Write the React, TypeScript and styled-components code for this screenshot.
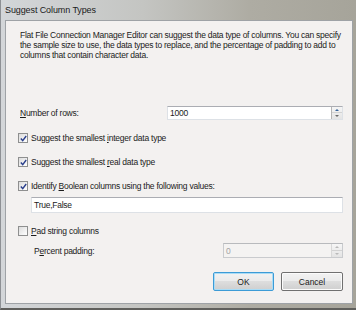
import { FC } from 'react';
import styled, { createGlobalStyle } from 'styled-components';

const GlobalStyle = createGlobalStyle`
	html, body {
		margin: 0;
		padding: 0;
		background: #f3f1f0;
	}
	body {
		font-family: 'Liberation Sans', Arial, sans-serif;
	}
`;

const Window = styled.div({
	width: '356px',
	height: '310px',
	boxSizing: 'border-box',
	display: 'flex',
	flexDirection: 'column',
	background: 'linear-gradient(90deg, #d3d6d9 0%, #c4c5c2 40%, #aeaca3 70%, #a6a49a 100%)',
	borderLeft: '1px solid #8d9094',
	borderBottom: '2px solid #5f5f5c',
	overflow: 'hidden',
	userSelect: 'none',
});

const TitleBar = styled.div({
	height: '19px',
	flex: 'none',
	display: 'flex',
	alignItems: 'center',
	paddingLeft: '4px',
	fontSize: '9px',
	letterSpacing: '-0.1px',
	color: '#1a1a1a',
});

const Body = styled.div({
	flex: 1,
	margin: '1px 3px 4px 4px',
	border: '1px solid #9ea2a6',
	background: '#f3f1f0',
	display: 'flex',
	flexDirection: 'column',
	padding: '0 9px 0 12px',
	fontSize: '8.5px',
	letterSpacing: '-0.25px',
	color: '#1b1b1b',
});

const Description = styled.p({
	margin: '9px 0 0 2px',
	lineHeight: '10px',
	whiteSpace: 'nowrap',
});

const Row = styled.div<{ $top: number; $height: number }>`
	display: flex;
	align-items: center;
	flex: none;
	margin-top: ${(p) => p.$top}px;
	height: ${(p) => p.$height}px;
`;

const Label = styled.span<{ $indent?: number }>`
	padding-left: ${(p) => p.$indent ?? 0}px;
	flex: 1;
	white-space: nowrap;
`;

const Key = styled.span({
	textDecoration: 'underline',
	textUnderlineOffset: '1px',
});

const TextBox = styled.div<{ $width?: number; $indent?: number; $disabled?: boolean }>`
	box-sizing: border-box;
	height: 100%;
	display: flex;
	align-items: center;
	position: relative;
	padding-left: 2px;
	margin-left: ${(p) => p.$indent ?? 0}px;
	${(p) => (p.$width ? `width: ${p.$width}px; flex: none;` : 'flex: 1;')}
	background: ${(p) => (p.$disabled ? '#f4f3f2' : '#ffffff')};
	border: 1px solid ${(p) => (p.$disabled ? '#c9cbce' : '#dde1e6')};
	border-top-color: ${(p) => (p.$disabled ? '#b8babd' : '#abadb3')};
	color: ${(p) => (p.$disabled ? '#a3a3a3' : '#1b1b1b')};
`;

const Spinner = styled.div<{ $disabled?: boolean }>`
	position: absolute;
	right: 0;
	top: 0;
	bottom: 0;
	width: 10px;
	display: grid;
	grid-template-rows: 1fr 1fr;
	border-left: 1px solid ${(p) => (p.$disabled ? '#d8d8d8' : '#b5b5b5')};
	background: linear-gradient(#f6f6f6, #e4e4e4);
`;

const SpinHalf = styled.div<{ $dir: 'up' | 'down'; $disabled?: boolean }>`
	display: flex;
	align-items: center;
	justify-content: center;
	${(p) => (p.$dir === 'up' ? 'border-bottom: 1px solid #d2d2d2;' : '')}
	&::after {
		content: '';
		border-left: 2px solid transparent;
		border-right: 2px solid transparent;
		${(p) => (p.$dir === 'up' ? 'border-bottom' : 'border-top')}: 2px solid ${(p) =>
			p.$disabled ? '#b9b9b9' : p.$dir === 'up' ? '#35639a' : '#6a6a6a'};
	}
`;

const Box = styled.span({
	boxSizing: 'border-box',
	width: '10px',
	height: '10px',
	flex: 'none',
	marginRight: '3px',
	border: '1px solid #8e8f8f',
	background: 'linear-gradient(135deg, #dcdcdc, #f5f5f5 70%, #ffffff)',
	display: 'flex',
	alignItems: 'center',
	justifyContent: 'center',
});

const ButtonBar = styled.div({
	display: 'flex',
	justifyContent: 'flex-end',
	gap: '7px',
	marginTop: '14px',
	height: '19px',
});

const Button = styled.button<{ $default?: boolean; $width: number }>`
	box-sizing: border-box;
	width: ${(p) => p.$width}px;
	height: 19px;
	padding: 0;
	font: inherit;
	font-size: 8.5px;
	color: #1b1b1b;
	border-radius: 2px;
	border: 1px solid ${(p) => (p.$default ? '#3c9bd6' : '#707070')};
	box-shadow: inset 0 0 0 1px ${(p) => (p.$default ? '#a9dcf6' : '#fbfbfb')};
	background: linear-gradient(#f2f2f2 0%, #ebebeb 45%, #dddddd 50%, #cfcfcf 100%);
`;

const Check: FC = () => (
	<svg width='7' height='7' viewBox='0 0 7 7'>
		<path d='M0.8 3.6 L2.7 5.6 L6.2 1' fill='none' stroke='#2a3f8c' strokeWidth='1.4' />
	</svg>
);

const Checkbox: FC<{ checked?: boolean; children: React.ReactNode; top: number }> = ({
	checked,
	children,
	top,
}) => (
	<Row $top={top} $height={12}>
		<Box>{checked && <Check />}</Box>
		<Label>{children}</Label>
	</Row>
);

const Spin: FC<{ disabled?: boolean }> = ({ disabled }) => (
	<Spinner $disabled={disabled}>
		<SpinHalf $dir='up' $disabled={disabled} />
		<SpinHalf $dir='down' $disabled={disabled} />
	</Spinner>
);

const App: FC = () => {
	return (
		<>
			<GlobalStyle />
			<Window>
				<TitleBar>Suggest Column Types</TitleBar>
				<Body>
					<Description>
						Flat File Connection Manager Editor can suggest the data type of columns. You can specify
						<br />
						the sample size to use, the data types to replace, and the percentage of padding to add to
						<br />
						columns that contain character data.
					</Description>

					<Row $top={46} $height={14}>
						<Label $indent={2}>
							<Key>N</Key>umber of rows:
						</Label>
						<TextBox $width={176}>
							1000
							<Spin />
						</TextBox>
					</Row>

					<Checkbox checked top={12}>
						Suggest the smallest <Key>i</Key>nteger data type
					</Checkbox>
					<Checkbox checked top={12}>
						Suggest the smallest <Key>r</Key>eal data type
					</Checkbox>
					<Checkbox checked top={12}>
						Identify <Key>B</Key>oolean columns using the following values:
					</Checkbox>

					<Row $top={5} $height={16}>
						<TextBox $indent={13}>True,False</TextBox>
					</Row>

					<Checkbox top={12}>
						<Key>P</Key>ad string columns
					</Checkbox>

					<Row $top={6} $height={15}>
						<Label $indent={16}>
							P<Key>e</Key>rcent padding:
						</Label>
						<TextBox $width={120} $disabled>
							0
							<Spin disabled />
						</TextBox>
					</Row>

					<ButtonBar>
						<Button $default $width={61}>
							OK
						</Button>
						<Button $width={62}>Cancel</Button>
					</ButtonBar>
				</Body>
			</Window>
		</>
	);
};

export default App;
